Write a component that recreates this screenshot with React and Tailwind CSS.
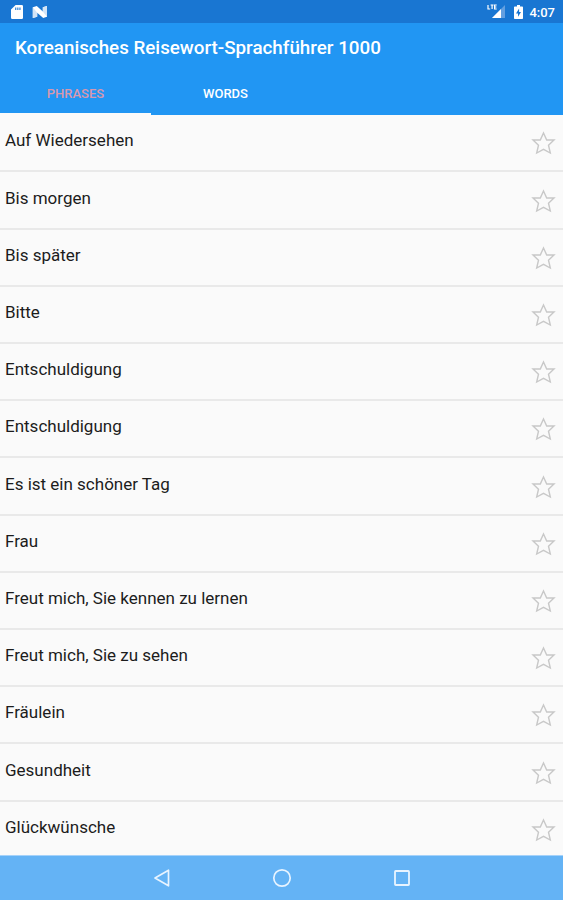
const phrases = [
  'Auf Wiedersehen',
  'Bis morgen',
  'Bis später',
  'Bitte',
  'Entschuldigung',
  'Entschuldigung',
  'Es ist ein schöner Tag',
  'Frau',
  'Freut mich, Sie kennen zu lernen',
  'Freut mich, Sie zu sehen',
  'Fräulein',
  'Gesundheit',
  'Glückwünsche',
];

function StatusBar() {
  return (
    <div className="flex h-[23px] shrink-0 items-center bg-[#1976d2] text-white">
      <svg className="ml-[11px] h-[14px] w-[12px]" viewBox="0 0 12 14" fill="currentColor">
        <path fillRule="evenodd" d="M4.6 0H10.8Q12 0 12 1.2V12.8Q12 14 10.8 14H1.2Q0 14 0 12.8V4.6ZM4.2 2.6V5H5.3V2.6ZM6.3 2.6V5H7.4V2.6ZM8.4 2.6V5H9.5V2.6Z" />
      </svg>
      <svg className="ml-[9px] h-[14px] w-[16px]" viewBox="0 0 16 14">
        <path d="M.8 2.2L4.8 1L10.8 6.4V2.2L15 1V11.8L11.2 13L5.2 7.8V11.8L.8 13Z" fill="#fff" />
        <path d="M.8 2.2L5.2 7.8V11.8L.8 13ZM10.8 2.2L15 1V11.8L10.8 6.4Z" fill="#d3e4f6" />
      </svg>
      <svg className="ml-auto h-[15px] w-[19px]" viewBox="0 0 19 15">
        <path d="M18 1V14H5Z" fill="#639fe0" />
        <path d="M14 5V14H5Z" fill="#fff" />
        <path d="M1 1V5H3.2M3.6 1H6.6M5.1 1V5M9.7 1H7.6V5H9.7M7.6 3H9.4" fill="none" stroke="#fff" strokeWidth="1.2" />
      </svg>
      <svg className="ml-[8px] h-[14px] w-[9px]" viewBox="0 0 9 14">
        <path d="M3 0H6V1.4H8.2Q9 1.4 9 2.2V13.2Q9 14 8.2 14H.8Q0 14 0 13.2V2.2Q0 1.4 .8 1.4H3Z" fill="#fff" />
        <path d="M5.1 3.6L2 8.4H4V11.8L7 7H5.1Z" fill="#1976d2" />
      </svg>
      <span className="mt-[1px] mr-[8px] ml-[6px] text-[13px] leading-none font-medium">4:07</span>
    </div>
  );
}

function Header() {
  return (
    <header className="flex h-[92px] shrink-0 flex-col bg-[#2196f3] text-white">
      <h1 className="flex h-[50px] items-center pt-px pl-[15px] text-[18.8px] font-medium whitespace-nowrap">
        Koreanisches Reisewort-Sprachführer 1000
      </h1>
      <nav className="flex flex-1 text-[13px] font-medium">
        <button className="w-[151px] border-b-2 border-[#fafafa] pt-px text-[#d898ae]">PHRASES</button>
        <button className="w-[149px] border-b-2 border-transparent pt-px">WORDS</button>
      </nav>
    </header>
  );
}

function PhraseRow({ text }) {
  return (
    <li className="flex h-[57.2px] shrink-0 items-start justify-between border-b-2 border-[#e9e9e9] pr-[7px] pl-[5px]">
      <span className="pt-[13.2px] text-[17px] leading-[24px] text-[#1c1c1c]">{text}</span>
      <svg className="mt-[16.2px] h-[24px] w-[25px]" viewBox="0 0 25 24" fill="none" stroke="#c8c8c8" strokeWidth="1.4">
        <path d="M12.5 2L15.7 9H23L17.5 14.2L19.3 22L12.5 18.3L5.7 22L7.5 14.2L2 9H9.3Z" />
      </svg>
    </li>
  );
}

function NavigationBar() {
  return (
    <footer className="flex h-[45px] shrink-0 items-center justify-center gap-[100px] border-t border-[#a5d2fa] bg-[#64b3f5]">
      <svg className="h-5 w-5" viewBox="0 0 20 20" fill="none" stroke="#e8f4ff" strokeWidth="1.7" strokeLinejoin="round">
        <path d="M16.5 2.2V17.8L3 10Z" />
      </svg>
      <svg className="h-5 w-5" viewBox="0 0 20 20" fill="none" stroke="#e8f4ff" strokeWidth="1.7">
        <circle cx="10" cy="10" r="8.2" />
      </svg>
      <svg className="h-5 w-5" viewBox="0 0 20 20" fill="none" stroke="#e8f4ff" strokeWidth="1.8">
        <rect x="3" y="3" width="14" height="14" rx=".7" />
      </svg>
    </footer>
  );
}

export default function App() {
  return (
    <div className="flex h-screen w-full flex-col overflow-hidden bg-[#fafafa] font-[Roboto,sans-serif]">
      <StatusBar />
      <Header />
      <ul className="flex min-h-0 flex-1 flex-col overflow-hidden pt-[0.3px]">
        {phrases.map((text, index) => (
          <PhraseRow key={index} text={text} />
        ))}
      </ul>
      <NavigationBar />
    </div>
  );
}
